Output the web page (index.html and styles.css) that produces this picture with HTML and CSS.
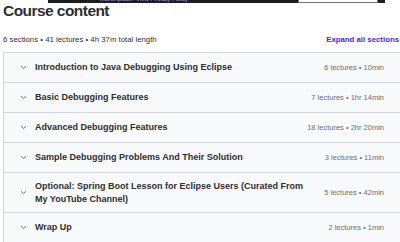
FILE: index.html
```html
<!DOCTYPE html>
<html lang="en">
<head>
  <meta charset="UTF-8">
  <title>Course content</title>
  <link rel="stylesheet" href="styles.css">
</head>
<body>
  <!-- bottom edge of the cookie banner above -->
  <div class="banner">
    <span class="banner-text">marketplace. View Privacy Policy</span>
    <span class="banner-btn"></span>
  </div>

  <div class="content">
    <h2 class="title">Course content</h2>

    <div class="summary">
      <span>6 sections • 41 lectures • 4h 37m total length</span>
      <span class="expand">Expand all sections</span>
    </div>

    <div class="sections">
      <div class="section">
        <span class="chevron"><svg width="7" height="5" viewBox="0 0 7 5"><path d="M1 1.2 L3.5 3.6 L6 1.2" fill="none" stroke="#6a6f73" stroke-width="1"/></svg></span>
        <span class="section-title">Introduction to Java Debugging Using Eclipse</span>
        <span class="meta">6 lectures • 10min</span>
      </div>
      <div class="section">
        <span class="chevron"><svg width="7" height="5" viewBox="0 0 7 5"><path d="M1 1.2 L3.5 3.6 L6 1.2" fill="none" stroke="#6a6f73" stroke-width="1"/></svg></span>
        <span class="section-title">Basic Debugging Features</span>
        <span class="meta">7 lectures • 1hr 14min</span>
      </div>
      <div class="section">
        <span class="chevron"><svg width="7" height="5" viewBox="0 0 7 5"><path d="M1 1.2 L3.5 3.6 L6 1.2" fill="none" stroke="#6a6f73" stroke-width="1"/></svg></span>
        <span class="section-title">Advanced Debugging Features</span>
        <span class="meta">18 lectures • 2hr 20min</span>
      </div>
      <div class="section">
        <span class="chevron"><svg width="7" height="5" viewBox="0 0 7 5"><path d="M1 1.2 L3.5 3.6 L6 1.2" fill="none" stroke="#6a6f73" stroke-width="1"/></svg></span>
        <span class="section-title">Sample Debugging Problems And Their Solution</span>
        <span class="meta">3 lectures • 11min</span>
      </div>
      <div class="section tall">
        <span class="chevron"><svg width="7" height="5" viewBox="0 0 7 5"><path d="M1 1.2 L3.5 3.6 L6 1.2" fill="none" stroke="#6a6f73" stroke-width="1"/></svg></span>
        <span class="section-title">Optional: Spring Boot Lesson for Eclipse Users (Curated From My YouTube Channel)</span>
        <span class="meta">5 lectures • 42min</span>
      </div>
      <div class="section">
        <span class="chevron"><svg width="7" height="5" viewBox="0 0 7 5"><path d="M1 1.2 L3.5 3.6 L6 1.2" fill="none" stroke="#6a6f73" stroke-width="1"/></svg></span>
        <span class="section-title">Wrap Up</span>
        <span class="meta">2 lectures • 1min</span>
      </div>
    </div>
  </div>
</body>
</html>
```

FILE: styles.css
```css
body {
  margin: 0;
  font-family: "Liberation Sans", Arial, sans-serif;
  color: #2d2f31;
  background: #ffffff;
  overflow: hidden;
}

.banner {
  display: flex;
  align-items: flex-start;
  height: 3px;
  width: 337px;
  margin-left: 48px;
  background: #1c1d1f;
  overflow: hidden;
}

.banner-text {
  margin-left: 52px;
  font-size: 6px;
  line-height: 1;
  margin-top: -4px;
  color: #a9a4e8;
}

.banner-btn {
  margin-left: auto;
  margin-right: 7px;
  width: 78px;
  height: 2px;
  background: #ffffff;
  border: 1px solid #6a6f73;
  border-top: none;
}

.content {
  width: 400px;
  margin-left: 3px;
}

.title {
  margin: -1px 0 0;
  font-size: 15.5px;
  line-height: 18px;
  font-weight: 700;
  letter-spacing: -0.55px;
}

.summary {
  display: flex;
  justify-content: space-between;
  align-items: center;
  margin-top: 14px;
  font-size: 7.8px;
  line-height: 12px;
  color: #2d2f31;
}

.expand {
  font-weight: 700;
  color: #5624d0;
  margin-right: 4px;
}

.sections {
  margin-top: 6px;
  border: 1px solid #d1d7dc;
  border-bottom: none;
}

.section {
  display: flex;
  align-items: center;
  height: 29px;
  padding: 0 18px 0 16px;
  background: #f7f9fa;
  border-bottom: 1px solid #d1d7dc;
}

.section.tall {
  height: 39px;
}

.chevron {
  display: flex;
  width: 15px;
}

.section-title {
  flex: 0 1 272px;
  font-size: 9px;
  line-height: 13px;
  font-weight: 700;
}

.meta {
  margin-left: auto;
  font-size: 7.5px;
  color: #6a6f73;
  white-space: nowrap;
}
```
